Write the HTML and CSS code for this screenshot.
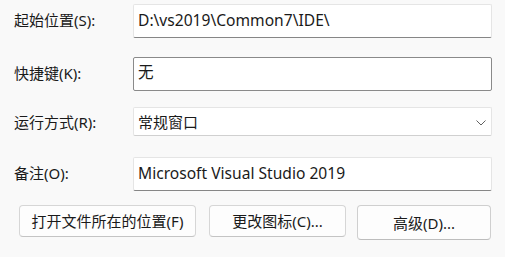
FILE: index.html
```html
<!DOCTYPE html>
<html lang="zh-CN">
<head>
<meta charset="utf-8">
<link rel="stylesheet" href="styles.css">
</head>
<body>
<div class="dialog">
  <div class="row row-start">
    <div class="label">起始位置(S):</div>
    <div class="field field-plain">D:\vs2019\Common7\IDE\</div>
  </div>
  <div class="row row-key">
    <div class="label">快捷键(K):</div>
    <div class="field field-boxed">无</div>
  </div>
  <div class="row row-run">
    <div class="label">运行方式(R):</div>
    <div class="field field-select">
      <span>常规窗口</span>
      <svg class="chevron" width="10" height="6" viewBox="0 0 10 6"><path d="M0.5 0.5 L5 5 L9.5 0.5" fill="none" stroke="#606060" stroke-width="1"/></svg>
    </div>
  </div>
  <div class="row row-note">
    <div class="label">备注(O):</div>
    <div class="field field-plain">Microsoft Visual Studio 2019</div>
  </div>
  <div class="buttons">
    <div class="btn btn-open">打开文件所在的位置(F)</div>
    <div class="btn btn-icon">更改图标(C)...</div>
    <div class="btn btn-adv">高级(D)...</div>
  </div>
</div>
</body>
</html>
```
FILE: styles.css
```css
html, body {
  margin: 0;
  padding: 0;
  background: #f9f9f9;
}
body {
  font-family: "Noto Sans", "Noto Sans CJK SC", sans-serif;
  font-size: 15px;
  color: #1a1a1a;
  width: 505px;
  height: 257px;
  overflow: hidden;
}
.dialog {
  display: flex;
  flex-direction: column;
  padding: 4px 13px 0 14px;
}
.row {
  display: grid;
  grid-template-columns: 119px 359px;
  align-items: start;
}
.row-start { height: 34px; }
.row-key { height: 34px; margin-top: 19px; }
.row-run { height: 29px; margin-top: 16px; }
.row-note { height: 34px; margin-top: 21px; }
.label {
  line-height: 20px;
  padding-top: 6px;
  white-space: nowrap;
}
.row-run .label { padding-top: 5px; }
.field {
  box-sizing: border-box;
  height: 100%;
  background: #ffffff;
  padding: 5px 0 0 4px;
  font-size: 15.6px;
  line-height: 20px;
  white-space: nowrap;
  border-radius: 2px;
}
.field-plain {
  border: 1px solid #e5e5e5;
  border-bottom-color: #868686;
}
.field-boxed {
  border: 1px solid #8a8a8a;
  padding-top: 4px;
}
.field-select {
  font-size: 15px;
  border: 1px solid #e5e5e5;
  border-bottom-color: #d0d0d0;
  display: flex;
  align-items: flex-start;
  justify-content: space-between;
  padding-top: 4px;
  padding-right: 5px;
}
.chevron {
  margin-top: 8px;
}
.buttons {
  display: flex;
  margin-top: 14px;
  margin-left: 5px;
  align-items: flex-start;
}
.btn {
  box-sizing: border-box;
  height: 32px;
  background: #fdfdfd;
  border: 1px solid #d6d6d6;
  border-bottom-color: #c4c4c4;
  border-radius: 4px;
  display: flex;
  align-items: center;
  justify-content: center;
  line-height: 20px;
  white-space: nowrap;
}
.btn-open { width: 177px; }
.btn-icon { width: 137px; margin-left: 13px; }
.btn-adv { width: 134px; height: 35px; margin-left: 11px; border-color: #cfcfcf; border-bottom-color: #bdbdbd; }
```
